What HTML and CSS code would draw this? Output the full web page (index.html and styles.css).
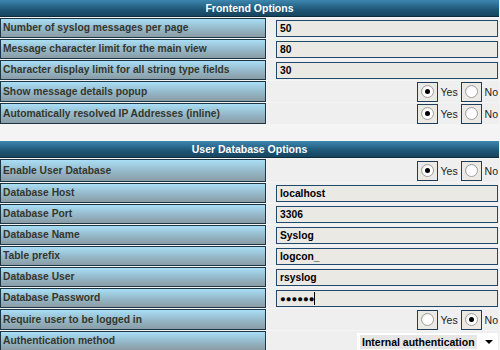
FILE: index.html
```html
<!DOCTYPE html>
<html lang="en">
  <head>
    <title>Options</title>
    <meta charset="utf-8">
    <link rel="stylesheet" href="styles.css">
  </head>
  <body>
    <table class="options">
      <colgroup><col class="col-label"><col></colgroup>
      <tr><th colspan="2" class="head">Frontend Options</th></tr>
      <tr>
        <td class="label">Number of syslog messages per page</td>
        <td class="value"><span class="field">50</span></td>
      </tr>
      <tr>
        <td class="label">Message character limit for the main view</td>
        <td class="value"><span class="field">80</span></td>
      </tr>
      <tr>
        <td class="label">Character display limit for all string type fields</td>
        <td class="value"><span class="field">30</span></td>
      </tr>
      <tr>
        <td class="label">Show message details popup</td>
        <td class="value choice">
          <span class="radio-box"><span class="radio on"></span></span><span class="opt">Yes</span>
          <span class="radio-box"><span class="radio"></span></span><span class="opt">No</span>
        </td>
      </tr>
      <tr>
        <td class="label">Automatically resolved IP Addresses (inline)</td>
        <td class="value choice">
          <span class="radio-box"><span class="radio on"></span></span><span class="opt">Yes</span>
          <span class="radio-box"><span class="radio"></span></span><span class="opt">No</span>
        </td>
      </tr>
      <tr><td colspan="2" class="spacer"></td></tr>
      <tr><th colspan="2" class="head">User Database Options</th></tr>
      <tr class="tall">
        <td class="label">Enable User Database</td>
        <td class="value choice">
          <span class="radio-box"><span class="radio on"></span></span><span class="opt">Yes</span>
          <span class="radio-box"><span class="radio"></span></span><span class="opt">No</span>
        </td>
      </tr>
      <tr>
        <td class="label">Database Host</td>
        <td class="value"><span class="field">localhost</span></td>
      </tr>
      <tr>
        <td class="label">Database Port</td>
        <td class="value"><span class="field">3306</span></td>
      </tr>
      <tr>
        <td class="label">Database Name</td>
        <td class="value"><span class="field">Syslog</span></td>
      </tr>
      <tr>
        <td class="label">Table prefix</td>
        <td class="value"><span class="field">logcon_</span></td>
      </tr>
      <tr>
        <td class="label">Database User</td>
        <td class="value"><span class="field">rsyslog</span></td>
      </tr>
      <tr>
        <td class="label">Database Password</td>
        <td class="value"><span class="field pass">●●●●●●<span class="caret"></span></span></td>
      </tr>
      <tr>
        <td class="label">Require user to be logged in</td>
        <td class="value choice">
          <span class="radio-box"><span class="radio"></span></span><span class="opt">Yes</span>
          <span class="radio-box"><span class="radio on"></span></span><span class="opt">No</span>
        </td>
      </tr>
      <tr>
        <td class="label">Authentication method</td>
        <td class="value choice">
          <span class="select"><span class="select__text">Internal authentication</span><span class="select__arrow"></span></span>
        </td>
      </tr>
    </table>
  </body>
</html>
```

FILE: styles.css
```css
html, body {
  margin: 0;
  padding: 0;
}

body {
  background-color: #f4f4f4;
  font-family: "Liberation Sans", Arial, sans-serif;
  font-size: 10px;
  line-height: 14px;
}

.options {
  width: 501px;
  table-layout: fixed;
  border-collapse: separate;
  border-spacing: 1px;
  margin: -1px 0 0 -1px;
  font-size: 10.3px;
}

.col-label {
  width: 266px;
}

.head {
  height: 16px;
  padding: 0;
  color: white;
  font-size: 10.5px;
  font-weight: bold;
  text-align: center;
  background: linear-gradient(#3d87b0, #1f5676 60%, #17445e);
  border-bottom: 1px solid #0f2c3c;
}

.label {
  height: 18px;
  padding: 0 0 0 2px;
  color: #36362c;
  font-weight: bold;
  white-space: nowrap;
  overflow: hidden;
  background: linear-gradient(#a9def5, #93b4c4 60%, #8a9ca4);
  border: 1px solid #1d3646;
}

.tall .label {
  height: 21px;
}

.value {
  padding: 1px 1px 1px 9px;
  background-color: #efefef;
}

.choice {
  padding: 0 1px 0 0;
  text-align: right;
  white-space: nowrap;
}

.field {
  display: block;
  height: 15px;
  line-height: 15px;
  padding-left: 3px;
  color: black;
  font-weight: bold;
  background-color: #ebe9e3;
  border: 1px solid #1f4a6e;
}

.pass {
  font-size: 9.5px;
}

.caret {
  display: inline-block;
  width: 1px;
  height: 13px;
  background: black;
  vertical-align: middle;
}

.spacer {
  height: 15px;
  padding: 0;
  background-color: #f4f4f4;
}

.radio-box {
  display: inline-block;
  width: 19px;
  height: 18px;
  margin-top: 1px;
  border: 1px solid #1f3c58;
  background-color: #ece9e4;
  vertical-align: middle;
  position: relative;
}

.radio {
  position: absolute;
  left: 3px;
  top: 2px;
  width: 11px;
  height: 11px;
  border-radius: 50%;
  border: 1px solid #a0a0a0;
  background: radial-gradient(circle at 60% 60%, #ffffff 50%, #d8d8d8);
}

.radio.on::after {
  content: "";
  position: absolute;
  left: 3px;
  top: 3px;
  width: 5px;
  height: 5px;
  border-radius: 50%;
  background: black;
}

.opt {
  display: inline-block;
  padding-left: 3px;
  color: #1c1c1c;
  font-size: 10.5px;
  text-align: left;
  vertical-align: middle;
}

.select {
  display: inline-flex;
  align-items: center;
  width: 141px;
  height: 18px;
  margin-top: 1px;
  background: white;
  text-align: left;
  vertical-align: middle;
}

.select__text {
  margin-left: 3px;
  padding: 0 2px;
  color: black;
  font-size: 10.5px;
  font-weight: bold;
  background-color: #e6e6e6;
}

.select__arrow {
  margin-left: auto;
  margin-right: 5px;
  width: 0;
  height: 0;
  border-left: 4px solid transparent;
  border-right: 4px solid transparent;
  border-top: 4px solid black;
}
```
